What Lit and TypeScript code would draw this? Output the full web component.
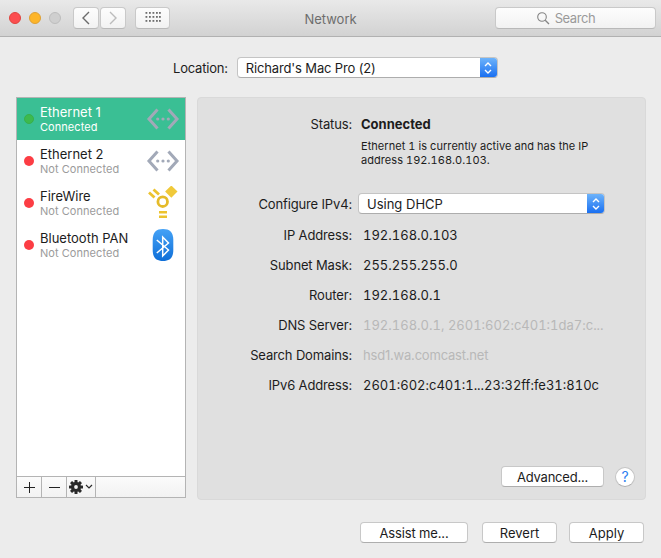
import { LitElement, html, css, svg } from 'lit';
import { customElement } from 'lit/decorators.js';

const services = [
  { name: 'Ethernet 1', status: 'Connected', on: true, icon: 'ethernet' },
  { name: 'Ethernet 2', status: 'Not Connected', on: false, icon: 'ethernet' },
  { name: 'FireWire', status: 'Not Connected', on: false, icon: 'firewire' },
  { name: 'Bluetooth PAN', status: 'Not Connected', on: false, icon: 'bluetooth' },
];

const details = [
  { label: 'IP Address:', value: '192.168.0.103', kind: 'num' },
  { label: 'Subnet Mask:', value: '255.255.255.0', kind: 'num' },
  { label: 'Router:', value: '192.168.0.1', kind: 'num' },
  { label: 'DNS Server:', value: '192.168.0.1, 2601:602:c401:1da7:c...', kind: 'num dim' },
  { label: 'Search Domains:', value: 'hsd1.wa.comcast.net', kind: 'host dim' },
  { label: 'IPv6 Address:', value: '2601:602:c401:1...23:32ff:fe31:810c', kind: 'num' },
];

const icons: Record<string, unknown> = {
  ethernet: svg`<svg width="34" height="24" viewBox="0 0 34 24">
    <path d="M11.500 2.500 3 12l8.500 9.500M22.500 2.500 31 12l-8.500 9.500" fill="none" stroke="#a2a9b8" stroke-width="3"/>
    <circle cx="11.700" cy="12" r="1.600" fill="#a2a9b8"/><circle cx="17" cy="12" r="1.600" fill="#a2a9b8"/><circle cx="22.300" cy="12" r="1.600" fill="#a2a9b8"/>
  </svg>`,
  firewire: svg`<svg width="30" height="34" viewBox="0 -1 30 34">
    <path d="M1 5.500 6.500 10.500M5.500 2.500l5.500 5" fill="none" stroke="#ecc32f" stroke-width="2.800"/>
    <path d="M23.300 -1.500 29.500 4.500l-6.200 6.200-6.200-6.200z" fill="#f0c93a"/>
    <circle cx="14.700" cy="14.700" r="4.800" fill="none" stroke="#e5bb2a" stroke-width="2.800"/>
    <path d="M11 24h8v2.500h-8zM11 28.500h8v2.500h-8z" fill="#ecc32f"/>
  </svg>`,
  bluetooth: svg`<svg width="22" height="32" viewBox="0 0 22 32">
    <defs><linearGradient id="bt" x1="0" y1="0" x2="0" y2="1"><stop offset="0" stop-color="#45a2f6"/><stop offset="1" stop-color="#0f6fd8"/></linearGradient></defs>
    <path d="M11 0C17.500 0 21.300 3 21.300 11v10C21.300 29 17.500 32 11 32S.7 29 .7 21V11C.7 3 4.500 0 11 0z" fill="url(#bt)"/>
    <path d="M4.800 11 16.500 21 10.700 27V8L16.500 14 4.800 24" fill="none" stroke="#fff" stroke-width="1.500"/>
  </svg>`,
};

const stepper = svg`<svg width="10" height="16" viewBox="0 0 10 16">
  <path d="M2 6l3-3 3 3M2 10l3 3 3-3" fill="none" stroke="#fff" stroke-width="1.400"/>
</svg>`;

@customElement('app-root')
export class AppRoot extends LitElement {
  static styles = css`
    :host {
      display: block;
      width: 661px;
      height: 558px;
      overflow: hidden;
      background: #ececec;
      font-family: Inter, 'Liberation Sans', sans-serif;
      font-size: 13px;
      color: #1c1c1c;
    }
    .titlebar {
      height: 36px;
      border-bottom: 1px solid #b1b1b1;
      background: linear-gradient(#e9e9e9, #d2d2d2);
      display: flex;
      align-items: center;
      padding: 0 5px 0 9px;
      position: relative;
    }
    .light {
      width: 12px;
      height: 12px;
      border-radius: 50%;
      margin-right: 8px;
      box-sizing: border-box;
    }
    .light.red { background: #fc4e50; border: 1px solid #e0443e; }
    .light.yellow { background: #fdb529; border: 1px solid #dea034; }
    .light.grey { background: #cfcfcf; border: 1px solid #bdbdbd; margin-right: 12px; }
    .tool {
      height: 22px;
      box-sizing: border-box;
      background: linear-gradient(#fdfdfd, #f2f2f2);
      border: 1px solid #c9c9c9;
      border-bottom-color: #b9b9b9;
      border-radius: 4px;
      display: flex;
      align-items: center;
      justify-content: center;
    }
    .nav { width: 26px; }
    .nav + .nav { margin-left: 1px; }
    .grid-btn { width: 35px; margin-left: 9px; }
    .title {
      position: absolute;
      left: 0;
      right: 0;
      top: 11px;
      text-align: center;
      color: #6d6d6d;
      line-height: 16px;
      pointer-events: none;
    }
    .search {
      margin-left: auto;
      width: 161px;
      gap: 5px;
      padding-right: 20px;
      color: #9a9a9a;
      letter-spacing: -0.4px;
    }
    .location {
      height: 21px;
      margin-top: 20px;
      display: flex;
      align-items: center;
      padding-left: 173px;
      gap: 9px;
    }
    .location span { letter-spacing: -0.2px; }
    .select {
      height: 21px;
      box-sizing: border-box;
      background: #fff;
      border: 1px solid #c4c4c4;
      border-bottom-color: #adadad;
      border-radius: 4px;
      display: flex;
      align-items: center;
      padding-left: 8px;
      overflow: hidden;
    }
    .select.loc { width: 261px; letter-spacing: -0.15px; }
    .select.cfg { width: 247px; }
    .step {
      margin-left: auto;
      align-self: stretch;
      width: 17px;
      background: linear-gradient(#6db3fb, #1a70f1);
      display: flex;
      align-items: center;
      justify-content: center;
    }
    .main {
      display: flex;
      margin: 19px 0 0 16px;
      gap: 11px;
      align-items: flex-start;
    }
    .sidebar {
      width: 170px;
      height: 401px;
      box-sizing: border-box;
      background: #fff;
      border: 1px solid #b4b4b4;
      display: flex;
      flex-direction: column;
    }
    .service {
      height: 42px;
      display: flex;
      align-items: center;
      padding-left: 7px;
    }
    .service.active { background: #3abf94; color: #fff; }
    .dot {
      width: 10px;
      height: 10px;
      border-radius: 50%;
      background: #fc3d44;
      margin-right: 6px;
      flex: none;
    }
    .dot.on { background: #3dba4e; border: 1px solid #38b04a; box-sizing: border-box; }
    .svc-text { flex: 1; }
    .svc-name { line-height: 15px; }
    .svc-status { font-size: 11px; line-height: 13px; color: #9b9b9b; margin-top: 1px; letter-spacing: 0.05px; }
    .active .svc-status { color: #fff; }
    .svc-icon {
      width: 34px;
      height: 34px;
      margin-right: 5px;
      display: flex;
      align-items: center;
      justify-content: center;
    }
    .toolbar {
      margin-top: auto;
      height: 20px;
      border-top: 1px solid #b4b4b4;
      background: linear-gradient(#fbfbfb, #f2f2f2);
      display: flex;
    }
    .toolbar div {
      width: 24px;
      border-right: 1px solid #b4b4b4;
      display: flex;
      align-items: center;
      justify-content: center;
    }
    .toolbar .gear { width: 28px; gap: 2px; }
    .panel {
      width: 449px;
      height: 403px;
      box-sizing: border-box;
      background: #e0e0e0;
      border: 1px solid #d9d9d9;
      border-radius: 4px;
      padding-top: 18px;
      display: flex;
      flex-direction: column;
    }
    .status-row {
      display: grid;
      grid-template-columns: 154px 1fr;
      column-gap: 9px;
      line-height: 16px;
    }
    .lbl { text-align: right; letter-spacing: -0.15px; }
    .connected { font-weight: 700; }
    .status-note {
      font-size: 11px;
      line-height: 14px;
      margin-top: 7px;
      width: 235px;
      letter-spacing: 0.05px;
      font-variant-numeric: tabular-nums;
    }
    .cfg-row {
      display: grid;
      grid-template-columns: 154px 1fr;
      column-gap: 6px;
      align-items: center;
      margin-top: 26px;
    }
    .rows { margin-top: 6px; }
    .row {
      display: grid;
      grid-template-columns: 154px 1fr;
      column-gap: 11px;
      height: 30px;
      align-items: center;
    }
    .num { font-variant-numeric: tabular-nums; }
    .host { letter-spacing: -0.2px; }
    .dim { color: #b8b8b8; }
    .panel-foot {
      margin-top: auto;
      margin-bottom: 12px;
      display: flex;
      align-items: center;
      padding-left: 303px;
      gap: 11px;
    }
    .btn {
      height: 21px;
      box-sizing: border-box;
      background: #fff;
      border: 1px solid #c8c8c8;
      border-bottom-color: #aeaeae;
      border-radius: 4px;
      display: flex;
      align-items: center;
      justify-content: center;
    }
    .advanced { width: 103px; letter-spacing: -0.2px; }
    .assist { width: 108px; letter-spacing: -0.15px; }
    .revert { width: 75px; margin-left: 14px; }
    .apply { width: 75px; margin-left: 12px; }
    .help {
      width: 20px;
      height: 20px;
      box-sizing: border-box;
      border-radius: 50%;
      background: #fff;
      border: 1px solid #c4c4c4;
      border-bottom-color: #aeaeae;
      color: #2c7ff0;
      font-size: 14px;
      display: flex;
      align-items: center;
      justify-content: center;
    }
    .actions {
      display: flex;
      margin-top: 22px;
      padding-left: 360px;
    }
  `;

  render() {
    return html`
      <div class="titlebar">
        <div class="light red"></div>
        <div class="light yellow"></div>
        <div class="light grey"></div>
        <div class="tool nav">
          <svg width="10" height="16" viewBox="0 0 10 16"><path d="M8 2 2 8l6 6" fill="none" stroke="#6b6b6b" stroke-width="1.400"/></svg>
        </div>
        <div class="tool nav">
          <svg width="10" height="16" viewBox="0 0 10 16"><path d="M2 2l6 6-6 6" fill="none" stroke="#bcbcbc" stroke-width="1.400"/></svg>
        </div>
        <div class="tool grid-btn">
          <svg width="16" height="12" viewBox="0 0 16 12" fill="#6e6e6e">
            ${[1, 5, 9].map((y) => [1.5, 5, 8.5, 12, 15].map((x) => svg`<rect x=${x - 1} y=${y - 1} width="1.800" height="1.800"/>`))}
          </svg>
        </div>
        <div class="title">Network</div>
        <div class="tool search">
          <svg width="14" height="14" viewBox="0 0 14 14"><circle cx="6" cy="6" r="4.300" fill="none" stroke="#858585" stroke-width="1.100"/><path d="M9.200 9.200 13 13" stroke="#858585" stroke-width="1.300"/></svg>
          Search
        </div>
      </div>

      <div class="location">
        <span>Location:</span>
        <div class="select loc">Richard's Mac Pro (2)<div class="step">${stepper}</div></div>
      </div>

      <div class="main">
        <div class="sidebar">
          ${services.map(
            (s, i) => html`
              <div class="service ${i === 0 ? 'active' : ''}">
                <div class="dot ${s.on ? 'on' : ''}"></div>
                <div class="svc-text">
                  <div class="svc-name">${s.name}</div>
                  <div class="svc-status">${s.status}</div>
                </div>
                <div class="svc-icon">${icons[s.icon]}</div>
              </div>
            `
          )}
          <div class="toolbar">
            <div><svg width="13" height="13" viewBox="0 0 13 13"><path d="M6.500 1v11M1 6.500h11" stroke="#222" stroke-width="1"/></svg></div>
            <div><svg width="13" height="13" viewBox="0 0 13 13"><path d="M1 6.500h11" stroke="#222" stroke-width="1"/></svg></div>
            <div class="gear">
              <svg width="14" height="14" viewBox="0 0 14 14">
                <g fill="#2a2a2a">
                  ${[0, 45, 90, 135].map((a) => svg`<rect x="5.500" y="0" width="3" height="14" rx=".5" transform="rotate(${a} 7 7)"/>`)}
                  <circle cx="7" cy="7" r="5"/>
                </g>
                <circle cx="7" cy="7" r="1.900" fill="#f6f6f6"/>
              </svg>
              <svg width="8" height="6" viewBox="0 0 8 6"><path d="M1 1l3 3 3-3" fill="none" stroke="#2a2a2a" stroke-width="1.200"/></svg>
            </div>
          </div>
        </div>

        <div class="panel">
          <div class="status-row">
            <div class="lbl">Status:</div>
            <div>
              <div class="connected">Connected</div>
              <div class="status-note">Ethernet 1 is currently active and has the IP address 192.168.0.103.</div>
            </div>
          </div>
          <div class="cfg-row">
            <div class="lbl">Configure IPv4:</div>
            <div class="select cfg">Using DHCP<div class="step">${stepper}</div></div>
          </div>
          <div class="rows">
            ${details.map(
              (d) => html`
                <div class="row">
                  <div class="lbl">${d.label}</div>
                  <div class=${d.kind}>${d.value}</div>
                </div>
              `
            )}
          </div>
          <div class="panel-foot">
            <div class="btn advanced">Advanced...</div>
            <div class="help">?</div>
          </div>
        </div>
      </div>

      <div class="actions">
        <div class="btn assist">Assist me...</div>
        <div class="btn revert">Revert</div>
        <div class="btn apply">Apply</div>
      </div>
    `;
  }
}
